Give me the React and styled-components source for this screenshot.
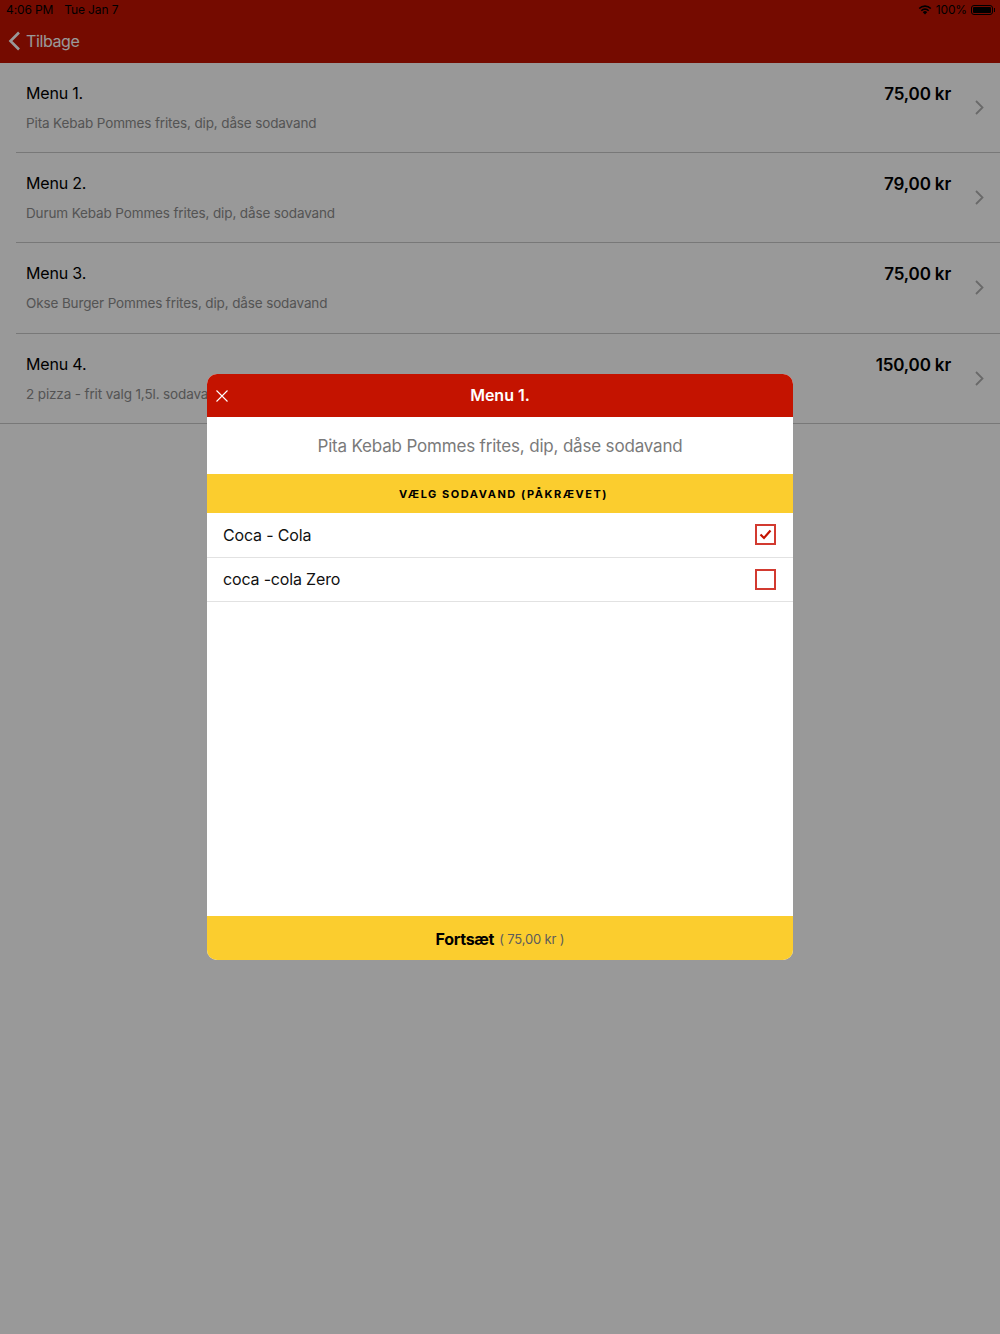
import styled, { createGlobalStyle } from "styled-components";

const GlobalStyle = createGlobalStyle`
  html, body {
    margin: 0;
    padding: 0;
    background: #fff;
    font-family: Inter, "Liberation Sans", sans-serif;
  }
`;

const Page = styled.div`
  position: relative;
  width: 1000px;
  height: 1334px;
  overflow: hidden;
  background: #fff;
`;

const Header = styled.header`
  height: 63px;
  box-sizing: border-box;
  background: #c41300;
  display: flex;
  flex-direction: column;
`;

const StatusBar = styled.div`
  height: 19px;
  display: flex;
  align-items: center;
  padding: 0 7px 0 6px;
  font-size: 12px;
  letter-spacing: -0.12px;
  color: #000;
`;

const StatusDate = styled.span`
  margin-left: 11px;
`;

const StatusRight = styled.div`
  margin-left: auto;
  display: flex;
  align-items: center;
  gap: 4px;
`;

const Battery = styled.div`
  position: relative;
  width: 22px;
  height: 10px;
  box-sizing: border-box;
  border: 1px solid #000;
  border-radius: 3px;
  padding: 1px;
  display: flex;

  &::before {
    content: "";
    flex: 1;
    background: #000;
    border-radius: 1px;
  }

  &::after {
    content: "";
    position: absolute;
    right: -3px;
    top: 2px;
    width: 1px;
    height: 4px;
    background: #000;
  }
`;

const BackRow = styled.div`
  flex: 1;
  display: flex;
  align-items: center;
  padding: 0 0 0 8px;
  gap: 5px;
  font-size: 16px;
  letter-spacing: -0.4px;
  color: #fff;
`;

const MenuRow = styled.div`
  height: 90.2px;
  box-sizing: border-box;
  margin-left: ${(p) => (p.$last ? 0 : 16)}px;
  padding: 20px 15px 0 ${(p) => (p.$last ? 26 : 10)}px;
  border-bottom: 1px solid #c8c8c8;
  display: flex;
  position: relative;
`;

const MenuText = styled.div`
  flex: 1;
`;

const MenuTitle = styled.div`
  font-size: 16px;
  line-height: 20px;
  letter-spacing: -0.18px;
  color: #000;
`;

const MenuDesc = styled.div`
  margin-top: 11px;
  font-size: 13.5px;
  line-height: 18px;
  letter-spacing: -0.13px;
  color: #8c8c8c;
`;

const Price = styled.div`
  font-size: 17px;
  font-weight: 600;
  line-height: 20px;
  letter-spacing: -0.15px;
  color: #000;
  margin-top: 1px;
  margin-right: 34px;
`;

const Chevron = styled.svg`
  position: absolute;
  right: 16px;
  top: 37px;
`;

const Overlay = styled.div`
  position: absolute;
  inset: 0;
  background: rgba(0, 0, 0, 0.4);
  display: flex;
  justify-content: center;
  align-items: flex-start;
  padding-top: 374px;
  box-sizing: border-box;
`;

const Modal = styled.div`
  width: 586px;
  height: 586px;
  background: #fff;
  border-radius: 10px;
  overflow: hidden;
  display: flex;
  flex-direction: column;
`;

const ModalHeader = styled.div`
  height: 43px;
  flex: none;
  padding-bottom: 2px;
  box-sizing: border-box;
  background: #c41300;
  color: #fff;
  font-size: 16px;
  font-weight: 600;
  display: flex;
  align-items: center;
  justify-content: center;
  position: relative;
`;

const CloseIcon = styled.svg`
  position: absolute;
  left: 8px;
  top: 15px;
`;

const ModalDesc = styled.div`
  height: 57px;
  flex: none;
  box-sizing: border-box;
  display: flex;
  align-items: center;
  justify-content: center;
  font-size: 17px;
  letter-spacing: -0.18px;
  color: #7a7a7a;
`;

const SectionTitle = styled.div`
  height: 39px;
  flex: none;
  background: #fbcd2e;
  color: #000;
  font-size: 11px;
  font-weight: 700;
  letter-spacing: 1.55px;
  display: flex;
  align-items: center;
  justify-content: center;
  padding-left: 7px;
`;

const Options = styled.div`
  flex: 1;
`;

const OptionRow = styled.div`
  height: 44.5px;
  box-sizing: border-box;
  padding: 0 17px 0 16px;
  border-bottom: 1px solid #e2e2e2;
  display: flex;
  align-items: center;
  justify-content: space-between;
  font-size: 16px;
  letter-spacing: -0.17px;
  color: #111;
`;

const CheckBox = styled.div`
  width: 21px;
  height: 21px;
  box-sizing: border-box;
  border: 2px solid #d23a30;
  display: flex;
  align-items: center;
  justify-content: center;
`;

const Footer = styled.div`
  height: 44px;
  flex: none;
  padding-top: 2px;
  box-sizing: border-box;
  background: #fbcd2e;
  display: flex;
  align-items: center;
  justify-content: center;
  gap: 5px;
`;

const FooterLabel = styled.span`
  font-size: 16px;
  font-weight: 700;
  letter-spacing: -0.3px;
  color: #000;
`;

const FooterPrice = styled.span`
  font-size: 13px;
  letter-spacing: -0.15px;
  color: #5c5c5c;
`;

const menus = [
  { title: "Menu 1.", desc: "Pita Kebab Pommes frites, dip, dåse sodavand", price: "75,00 kr" },
  { title: "Menu 2.", desc: "Durum Kebab Pommes frites, dip, dåse sodavand", price: "79,00 kr" },
  { title: "Menu 3.", desc: "Okse Burger Pommes frites, dip, dåse sodavand", price: "75,00 kr" },
  { title: "Menu 4.", desc: "2 pizza - frit valg 1,5l. sodavand", price: "150,00 kr" },
];

export default function App() {
  return (
    <Page>
      <GlobalStyle />
      <Header>
        <StatusBar>
          <span>4:06 PM</span>
          <StatusDate>Tue Jan 7</StatusDate>
          <StatusRight>
            <svg width="14" height="11" viewBox="0 0 14 11">
              <path d="M7 10.5 4.8 8.2a3.1 3.1 0 0 1 4.4 0L7 10.5Z" fill="#000" />
              <path d="M3.3 6.7a5.2 5.2 0 0 1 7.4 0M1.2 4.5a8.2 8.2 0 0 1 11.6 0" fill="none" stroke="#000" strokeWidth="1.6" />
            </svg>
            <span>100%</span>
            <Battery />
          </StatusRight>
        </StatusBar>
        <BackRow>
          <svg width="13" height="20" viewBox="0 0 13 20">
            <path d="M11 1.5 2.5 10l8.5 8.5" fill="none" stroke="#fff" strokeWidth="2.6" />
          </svg>
          <span>Tilbage</span>
        </BackRow>
      </Header>
      {menus.map((m, i) => (
        <MenuRow key={m.title} $last={i === 3}>
          <MenuText>
            <MenuTitle>{m.title}</MenuTitle>
            <MenuDesc>{m.desc}</MenuDesc>
          </MenuText>
          <Price>{m.price}</Price>
          <Chevron width="9" height="15" viewBox="0 0 9 15">
            <path d="M1 1l6.5 6.5L1 14" fill="none" stroke="#b0b0b0" strokeWidth="1.8" />
          </Chevron>
        </MenuRow>
      ))}
      <Overlay>
        <Modal>
          <ModalHeader>
            <CloseIcon width="14" height="14" viewBox="0 0 14 14">
              <path d="M1.5 1.5l11 11M12.5 1.5l-11 11" stroke="#fff" strokeWidth="1.1" />
            </CloseIcon>
            Menu 1.
          </ModalHeader>
          <ModalDesc>Pita Kebab Pommes frites, dip, dåse sodavand</ModalDesc>
          <SectionTitle>VÆLG SODAVAND (PÅKRÆVET)</SectionTitle>
          <Options>
            <OptionRow>
              Coca - Cola
              <CheckBox>
                <svg width="13" height="11" viewBox="0 0 13 11">
                  <path d="M1.5 5.5 5 9l6.5-7.5" fill="none" stroke="#c41300" strokeWidth="2.2" />
                </svg>
              </CheckBox>
            </OptionRow>
            <OptionRow>
              coca -cola Zero
              <CheckBox />
            </OptionRow>
          </Options>
          <Footer>
            <FooterLabel>Fortsæt</FooterLabel>
            <FooterPrice>( 75,00 kr )</FooterPrice>
          </Footer>
        </Modal>
      </Overlay>
    </Page>
  );
}
